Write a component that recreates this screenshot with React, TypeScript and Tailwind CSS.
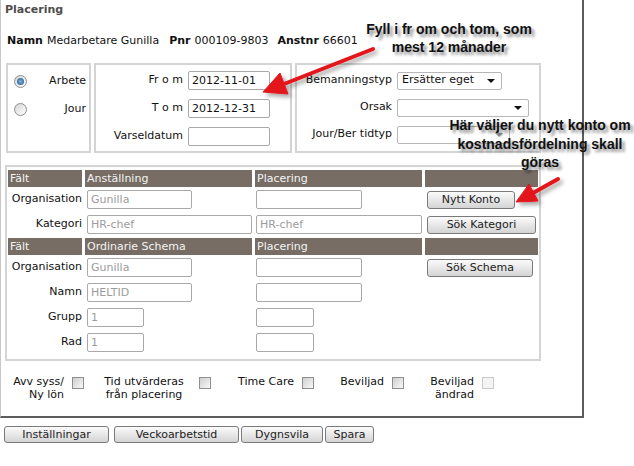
import React from "react";

function TextBox({
  className = "",
  value = "",
  muted = false,
}: {
  className?: string;
  value?: string;
  muted?: boolean;
}) {
  return (
    <input
      readOnly
      value={value}
      className={`block h-[19px] rounded-[2px] border border-[#a9a9a9] bg-white px-[3px] text-[11px] outline-none ${
        muted ? "text-[#9c9c9c]" : "text-[#111]"
      } ${className}`}
    />
  );
}

function SelectBox({
  className = "",
  value = "",
  faded = false,
}: {
  className?: string;
  value?: string;
  faded?: boolean;
}) {
  return (
    <div
      className={`flex h-[18px] items-center justify-between rounded-[2px] border border-[#b7b7b7] bg-white pl-[4px] pr-[6px] ${className}`}
    >
      <span>{value}</span>
      <span
        className={`h-0 w-0 border-x-[4px] border-t-[4px] border-x-transparent ${
          faded ? "border-t-[#a0a0a0]" : "border-t-[#111]"
        }`}
      />
    </div>
  );
}

function Radio({ checked = false }: { checked?: boolean }) {
  return (
    <span className="flex h-[13px] w-[13px] items-center justify-center rounded-full border border-[#8e8f8f] bg-linear-to-br from-[#d6d6d6] to-[#ffffff]">
      {checked && <span className="h-[7px] w-[7px] rounded-full bg-radial from-[#7fb4e0] to-[#1b4f86]" />}
    </span>
  );
}

function Check({ disabled = false }: { disabled?: boolean }) {
  return (
    <span
      className={`ml-[8px] mt-[2px] block h-[12px] w-[12px] shrink-0 border ${
        disabled
          ? "border-[#cacaca] bg-[#f4f4f4]"
          : "border-[#8f8f8f] bg-linear-to-br from-[#cfcfcf] to-[#f8f8f8]"
      }`}
    />
  );
}

function Btn({ label, className = "" }: { label: string; className?: string }) {
  return (
    <button
      className={`flex items-center justify-center rounded-[3px] border border-[#7a7a7a] bg-linear-to-b from-[#fbfbfb] to-[#d4d4d4] text-[11px] leading-none text-[#222] ${className}`}
    >
      {label}
    </button>
  );
}

function HeaderRow({ second }: { second: string }) {
  return (
    <div className="flex h-[17px] leading-[17px] text-[#f4f4f4]">
      <div className="w-[74px] bg-[#776d65] pl-[2px]">Fält</div>
      <div className="ml-[3px] w-[167px] bg-[#776d65] pl-[2px]">{second}</div>
      <div className="ml-[3px] w-[167px] bg-[#776d65] pl-[2px]">Placering</div>
      <div className="ml-[3px] w-[113px] bg-[#776d65]" />
    </div>
  );
}

function Row({
  label,
  left,
  right,
  action,
}: {
  label: string;
  left: React.ReactNode;
  right: React.ReactNode;
  action?: React.ReactNode;
}) {
  return (
    <div className="flex h-[25px] items-center">
      <div className="w-[74px] text-right">{label}</div>
      <div className="ml-[3px] w-[167px] pl-[2px]">{left}</div>
      <div className="ml-[3px] w-[167px] pl-[1px]">{right}</div>
      <div className="ml-[3px] w-[113px] pl-[2px]">{action}</div>
    </div>
  );
}

export default function App() {
  return (
    <div className="relative h-[466px] w-[634px] overflow-hidden bg-white font-['DejaVu_Sans',Verdana,sans-serif] text-[11px] text-[#111]">
      <div className="flex h-[418px] w-[584px] flex-col border-b-2 border-l border-r-2 border-b-[#5c5c5c] border-l-[#c8c8c8] border-r-[#5c5c5c]">
        <div className="mt-[3px] h-[14px] pl-[4px] font-bold leading-[14px] text-[#4d4d4d]">Placering</div>

        <div className="mt-[17px] flex h-[14px] items-center pl-[6px] leading-[14px]">
          <span className="font-bold">Namn</span>
          <span className="ml-[4px]">Medarbetare Gunilla</span>
          <span className="ml-[10px] font-bold">Pnr</span>
          <span className="ml-[4px]">000109-9803</span>
          <span className="ml-[9px] font-bold">Anstnr</span>
          <span className="ml-[4px]">66601</span>
        </div>

        {/* top boxes */}
        <div className="mt-[15px] flex gap-[3px] pl-[5px]">
          <div className="h-[90px] w-[85px] border-2 border-[#d4d4d4] pt-[2px]">
            <div className="flex h-[28px] items-center justify-between pl-[6px] pr-[3px]">
              <Radio checked />
              <span>Arbete</span>
            </div>
            <div className="flex h-[28px] items-center justify-between pl-[6px] pr-[3px]">
              <Radio />
              <span>Jour</span>
            </div>
          </div>

          <div className="h-[90px] w-[198px] border-2 border-[#d4d4d4] pt-[1px]">
            <div className="flex h-[28px] items-center justify-end gap-[5px] pr-[20px]">
              <span>Fr o m</span>
              <TextBox className="w-[82px]" value="2012-11-01" />
            </div>
            <div className="flex h-[28px] items-center justify-end gap-[5px] pr-[20px]">
              <span>T o m</span>
              <TextBox className="w-[82px]" value="2012-12-31" />
            </div>
            <div className="flex h-[28px] items-center justify-end gap-[5px] pr-[20px]">
              <span>Varseldatum</span>
              <TextBox className="w-[82px]" />
            </div>
          </div>

          <div className="h-[90px] w-[246px] border-2 border-[#d4d4d4] pt-[2px]">
            <div className="flex h-[27px] items-center gap-[5px]">
              <span className="w-[95px] text-right">Bemanningstyp</span>
              <SelectBox className="w-[105px]" value="Ersätter eget" />
            </div>
            <div className="flex h-[27px] items-center gap-[5px]">
              <span className="w-[95px] text-right">Orsak</span>
              <SelectBox className="w-[132px]" />
            </div>
            <div className="flex h-[27px] items-center gap-[5px]">
              <span className="w-[95px] text-right">Jour/Ber tidtyp</span>
              <SelectBox className="w-[113px]" faded />
            </div>
          </div>
        </div>

        {/* table */}
        <div className="ml-[4px] mt-[12px] w-[536px] border-2 border-[#d4d4d4] px-[1px] pb-[4px] pt-[3px]">
          <HeaderRow second="Anställning" />
          <Row
            label="Organisation"
            left={<TextBox className="w-[105px]" value="Gunilla" muted />}
            right={<TextBox className="w-[106px]" />}
            action={<Btn label="Nytt Konto" className="h-[18px] w-[88px]" />}
          />
          <Row
            label="Kategori"
            left={<TextBox className="w-[165px]" value="HR-chef" muted />}
            right={<TextBox className="w-[166px]" value="HR-chef" muted />}
            action={<Btn label="Sök Kategori" className="h-[18px] w-[109px]" />}
          />
          <div className="mt-[1px]">
            <HeaderRow second="Ordinarie Schema" />
          </div>
          <Row
            label="Organisation"
            left={<TextBox className="w-[105px]" value="Gunilla" muted />}
            right={<TextBox className="w-[106px]" />}
            action={<Btn label="Sök Schema" className="h-[18px] w-[106px]" />}
          />
          <Row
            label="Namn"
            left={<TextBox className="w-[105px]" value="HELTID" muted />}
            right={<TextBox className="w-[106px]" />}
          />
          <Row
            label="Grupp"
            left={<TextBox className="w-[57px]" value="1" muted />}
            right={<TextBox className="w-[58px]" />}
          />
          <Row
            label="Rad"
            left={<TextBox className="w-[57px]" value="1" muted />}
            right={<TextBox className="w-[58px]" />}
          />
        </div>

        {/* checkboxes */}
        <div className="mt-[14px] flex items-start pl-[6px] leading-[13px]">
          <div className="flex items-start">
            <span className="w-[57px] text-right">
              Avv syss/
              <br />
              Ny lön
            </span>
            <Check />
          </div>
          <div className="ml-[12px] flex items-start">
            <span className="w-[96px] text-center">
              Tid utvärderas
              <br />
              från placering
            </span>
            <span className="-ml-[1px]">
              <Check />
            </span>
          </div>
          <div className="ml-[2px] flex items-start">
            <span className="w-[81px] text-right">Time Care</span>
            <Check />
          </div>
          <div className="flex items-start">
            <span className="w-[70px] text-right">Beviljad</span>
            <Check />
          </div>
          <div className="flex items-start">
            <span className="w-[70px] text-right">
              Beviljad
              <br />
              ändrad
            </span>
            <Check disabled />
          </div>
        </div>
      </div>

      {/* bottom buttons */}
      <div className="mt-[8px] flex pl-[4px]">
        <Btn label="Inställningar" className="h-[17px] w-[105px]" />
        <Btn label="Veckoarbetstid" className="ml-[5px] h-[17px] w-[125px]" />
        <Btn label="Dygnsvila" className="ml-[2px] h-[17px] w-[82px]" />
        <Btn label="Spara" className="ml-[2px] h-[17px] w-[49px]" />
      </div>

      {/* annotations */}
      <div className="absolute left-[349px] top-[20px] w-[200px] text-center font-['Liberation_Sans',Arial,sans-serif] text-[14px] font-bold leading-[18px] text-[#111] [text-shadow:3px_3px_3px_rgba(0,0,0,0.45)]">
        Fyll i fr om och tom, som
        <br />
        mest 12 månader
      </div>
      <div className="absolute left-[430px] top-[116px] w-[220px] text-center font-['Liberation_Sans',Arial,sans-serif] text-[14px] font-bold leading-[18.5px] text-[#111] [text-shadow:3px_3px_3px_rgba(0,0,0,0.45)]">
        Här väljer du nytt konto om
        <br />
        kostnadsfördelning skall
        <br />
        göras
      </div>

      <svg className="pointer-events-none absolute left-0 top-0" width="634" height="466" viewBox="0 0 634 466">
        <defs>
          <filter id="sh" x="-20%" y="-20%" width="140%" height="140%">
            <feDropShadow dx="3" dy="3" stdDeviation="2" floodColor="#000" floodOpacity="0.35" />
          </filter>
        </defs>
        <g filter="url(#sh)" fill="#e3141b" stroke="#e3141b">
          <line x1="373" y1="49" x2="284" y2="84" strokeWidth="4" strokeLinecap="round" />
          <polygon points="263,92 288,94 280,73" strokeWidth="1" strokeLinejoin="round" />
          <line x1="558" y1="179" x2="533" y2="193" strokeWidth="4" strokeLinecap="round" />
          <polygon points="516,202 538,201 529,184" strokeWidth="1" strokeLinejoin="round" />
        </g>
      </svg>
    </div>
  );
}
